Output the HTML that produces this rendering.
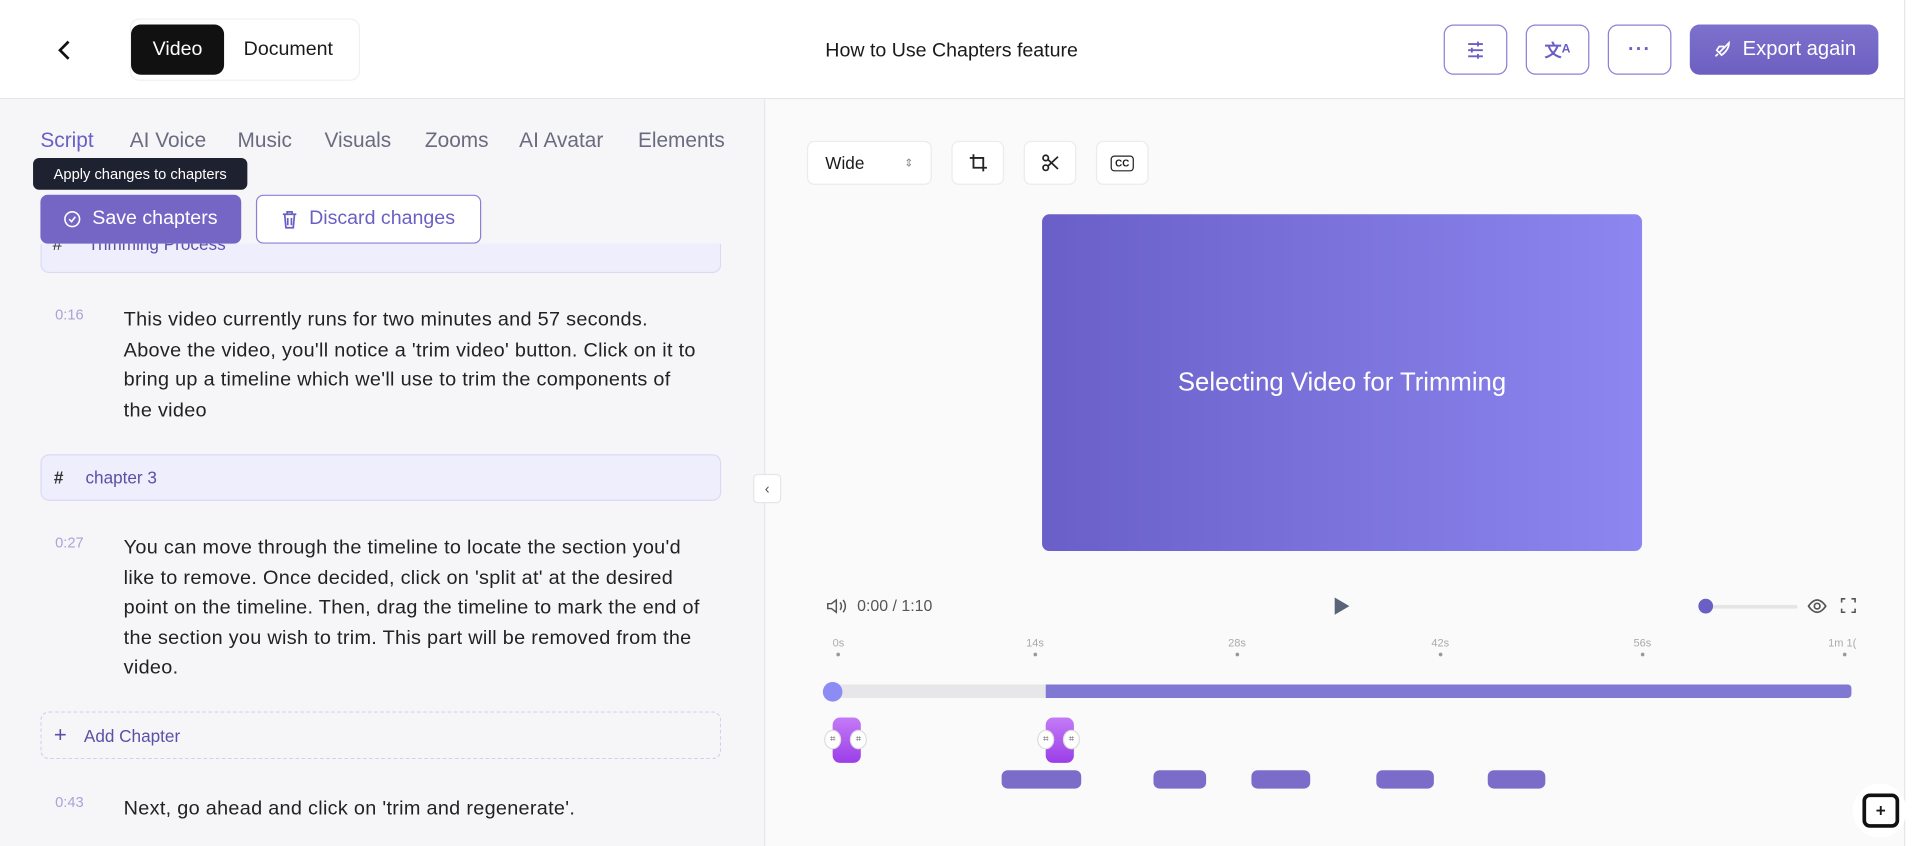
<!DOCTYPE html>
<html><head><meta charset="utf-8"><style>
*{box-sizing:border-box;margin:0;padding:0}
html,body{width:1920px;height:846px;overflow:hidden;background:#fafafa}
#w{width:1568px;height:691px;position:relative;transform:scale(1.22449);transform-origin:0 0;font-family:"Liberation Sans",sans-serif;color:#1a1a1a}
.a{position:absolute}
.hdr{left:0;top:0;width:1568px;height:81px;background:#fff;border-bottom:1px solid #e6e6ea}
.tab{font-size:17px;color:#6b6b80;top:105px}
.ibtn{top:20px;width:52px;height:41px;border:1.3px solid #8b80d6;border-radius:8px;background:#fff;display:flex;align-items:center;justify-content:center;color:#6a5fc4}
.txt{left:101px;font-size:16.2px;letter-spacing:0.25px;line-height:24.6px;color:#222;width:472px}
.ts{left:45px;font-size:12px;color:#a9a3d8}
.tb{top:115px;height:36px;border:1px solid #ebebef;border-radius:6px;background:#fff;display:flex;align-items:center;justify-content:center}
.seg{top:629px;height:15px;background:#7b6cc9;border-radius:5px}
.tick{top:520px;font-size:9px;color:#aaa}
.dot{width:3px;height:3px;border-radius:50%;background:#999;top:533px}
</style></head><body><div id="w">
<div class="a hdr"></div>
<svg class="a" style="left:45px;top:32px" width="16" height="18" viewBox="0 0 16 18"><path d="M11 2 4 9l7 7" fill="none" stroke="#111" stroke-width="2.2"/></svg>
<div class="a" style="left:106px;top:15px;width:188px;height:51px;border:1px solid #f0f0f0;border-radius:8px;background:#fff"></div>
<div class="a" style="left:107px;top:20px;width:76px;height:41px;background:#111;border-radius:8px;color:#fff;font-size:16px;display:flex;align-items:center;justify-content:center">Video</div>
<div class="a" style="left:199px;top:32px;font-size:16px">Document</div>
<div class="a" style="left:674px;top:33px;font-size:16px">How to Use Chapters feature</div>
<div class="a ibtn" style="left:1179px"><svg width="18" height="18" viewBox="0 0 18 18" stroke="#6a5fc4" stroke-width="1.5"><path d="M3 4h12M3 9h12M3 14h12M11 2v4M6 7v4M11 12v4"/></svg></div>
<div class="a ibtn" style="left:1246px;font-size:14px;font-weight:bold">文<span style="font-size:10px">A</span></div>
<div class="a ibtn" style="left:1313px;font-weight:bold;letter-spacing:1px">···</div>
<div class="a" style="left:1380px;top:20px;width:154px;height:41px;border-radius:8px;background:linear-gradient(#7d71cd,#6d5fc0);color:#fff;font-size:16.5px;display:flex;align-items:center;justify-content:center;gap:9px"><svg width="16" height="16" viewBox="0 0 16 16" fill="none" stroke="#fff" stroke-width="1.4"><path d="M6 10 14 2c0 4-2 7-6 10zM6 10 4 8l2-3h4M6 10l2 2M3 13l2-2"/></svg>Export again</div>
<div class="a" style="left:0;top:81px;width:625px;height:610px;background:#f6f6f8;border-right:1px solid #e6e6ea"></div>
<div class="a" style="left:1555px;top:0;width:13px;height:691px;background:#fff;border-left:1px solid #e6e6ea"></div>
<div class="a tab" style="left:33px;color:#6a5fc4">Script</div>
<div class="a tab" style="left:106px">AI Voice</div>
<div class="a tab" style="left:194px">Music</div>
<div class="a tab" style="left:265px">Visuals</div>
<div class="a tab" style="left:347px">Zooms</div>
<div class="a tab" style="left:424px">AI Avatar</div>
<div class="a tab" style="left:521px">Elements</div>
<div class="a" style="left:33px;top:199px;width:556px;height:24px;background:#eeeefc;border:1px solid #dcd9f5;border-top:none;border-radius:0 0 7px 7px;overflow:hidden"><span style="position:absolute;left:9px;top:-8px;font-size:14px;color:#333">#</span><span style="position:absolute;left:38px;top:-8px;font-size:14px;color:#5a50a8">Trimming Process</span></div>
<div class="a" style="left:27px;top:129px;width:175px;height:26px;background:#1e2130;border-radius:5px;color:#fff;font-size:12px;display:flex;align-items:center;justify-content:center">Apply changes to chapters</div>
<div class="a" style="left:33px;top:159px;width:164px;height:40px;background:#7566c6;border-radius:6px;color:#fff;font-size:16px;display:flex;align-items:center;justify-content:center;gap:9px"><svg width="14" height="14" viewBox="0 0 14 14" fill="none" stroke="#fff" stroke-width="1.3"><circle cx="7" cy="7" r="6"/><path d="M4.5 7l2 2 3-4"/></svg>Save chapters</div>
<div class="a" style="left:209px;top:159px;width:184px;height:40px;background:#fff;border:1.3px solid #8b80d6;border-radius:6px;color:#6a5fc4;font-size:16px;display:flex;align-items:center;justify-content:center;gap:9px"><svg width="13" height="15" viewBox="0 0 13 15" fill="none" stroke="#6a5fc4" stroke-width="1.4"><path d="M1 3h11M4.5 3V1h4v2M2.5 3l1 11h6l1-11M5 6v6M8 6v6"/></svg>Discard changes</div>
<div class="a ts" style="top:250px">0:16</div>
<div class="a txt" style="top:249px">This video currently runs for two minutes and 57 seconds. Above the video, you'll notice a 'trim video' button. Click on it to bring up a timeline which we'll use to trim the components of the video</div>
<div class="a" style="left:33px;top:371px;width:556px;height:38px;background:#eeeefc;border:1px solid #dcd9f5;border-radius:7px;font-size:14px;color:#5a50a8;display:flex;align-items:center"><span style="margin-left:10px;font-weight:bold;color:#333">#</span><span style="margin-left:18px">chapter 3</span></div>
<div class="a ts" style="top:436px">0:27</div>
<div class="a txt" style="top:435px">You can move through the timeline to locate the section you'd like to remove. Once decided, click on 'split at' at the desired point on the timeline. Then, drag the timeline to mark the end of the section you wish to trim. This part will be removed from the video.</div>
<div class="a" style="left:33px;top:581px;width:556px;height:39px;border:1px dashed #d4d0ee;border-radius:7px;font-size:14px;color:#5a50a8;display:flex;align-items:center"><span style="margin-left:10px;font-size:18px">+</span><span style="margin-left:14px">Add Chapter</span></div>
<div class="a ts" style="top:648px">0:43</div>
<div class="a txt" style="top:648px">Next, go ahead and click on 'trim and regenerate'.</div>
<div class="a" style="left:615px;top:387px;width:23px;height:24px;background:#fff;border:1px solid #e6e6ea;border-radius:4px;font-size:12px;color:#555;text-align:center;line-height:22px">‹</div>
<div class="a tb" style="left:659px;width:102px;justify-content:space-between;padding:0 14px;font-size:14px">Wide<span style="font-size:9px;color:#888">⇕</span></div>
<div class="a tb" style="left:777px;width:43px"><svg width="16" height="16" viewBox="0 0 16 16" fill="none" stroke="#222" stroke-width="1.5"><path d="M4 1v11h11M1 4h11v11"/></svg></div>
<div class="a tb" style="left:836px;width:43px"><svg width="16" height="16" viewBox="0 0 16 16" fill="none" stroke="#222" stroke-width="1.4"><circle cx="4" cy="4" r="2.2"/><circle cx="4" cy="12" r="2.2"/><path d="M6 5.5 14 13M6 10.5 14 3"/></svg></div>
<div class="a tb" style="left:895px;width:43px"><div style="border:1.4px solid #222;border-radius:3px;font-size:8px;font-weight:bold;padding:1px 3px">CC</div></div>
<div class="a" style="left:851px;top:175px;width:490px;height:275px;border-radius:6px;background:linear-gradient(90deg,#6a5fc8,#8d86f0);color:#fff;font-size:21px;display:flex;align-items:center;justify-content:center">Selecting Video for Trimming</div>
<svg class="a" style="left:675px;top:488px" width="18" height="14" fill="none" stroke="#555" stroke-width="1.2"><path d="M1 5h3l4-3v10L4 9H1zM11 4c1.5 1.5 1.5 4.5 0 6M13.5 2c2.5 3 2.5 7 0 10"/></svg>
<div class="a" style="left:700px;top:487px;font-size:13px;color:#555">0:00 / 1:10</div>
<svg class="a" style="left:1089px;top:487px" width="14" height="16"><path d="M1 1l12 7-12 7z" fill="#5a6478"/></svg>
<div class="a" style="left:1392px;top:494px;width:76px;height:3px;background:#e5e5e5;border-radius:2px"></div>
<div class="a" style="left:1387px;top:489px;width:12px;height:12px;border-radius:50%;background:#6a5fc4"></div>
<svg class="a" style="left:1476px;top:487px" width="16" height="16" fill="none" stroke="#555" stroke-width="1.4"><path d="M1 8s3-5 7-5 7 5 7 5-3 5-7 5-7-5-7-5z"/><circle cx="8" cy="8" r="2.3"/></svg>
<svg class="a" style="left:1503px;top:488px" width="13" height="13" fill="none" stroke="#555" stroke-width="1.3"><path d="M1 4V1h3M9 1h3v3M12 9v3H9M4 12H1V9"/></svg>
<div class="a tick" style="left:680px">0s</div><div class="a dot" style="left:683px"></div>
<div class="a tick" style="left:838px">14s</div><div class="a dot" style="left:844px"></div>
<div class="a tick" style="left:1003px">28s</div><div class="a dot" style="left:1009px"></div>
<div class="a tick" style="left:1169px">42s</div><div class="a dot" style="left:1175px"></div>
<div class="a tick" style="left:1334px">56s</div><div class="a dot" style="left:1340px"></div>
<div class="a tick" style="left:1493px">1m 1(</div><div class="a dot" style="left:1505px"></div>
<div class="a" style="left:680px;top:559px;width:174px;height:11px;background:#e7e7ea;border-radius:4px 0 0 4px"></div>
<div class="a" style="left:854px;top:559px;width:658px;height:11px;background:#8178d4;border-radius:0 3px 3px 0"></div>
<div class="a" style="left:672px;top:557px;width:16px;height:16px;border-radius:50%;background:#8d8cf5"></div>
<div class="a" style="left:680px;top:586px;width:23px;height:37px;border-radius:6px;background:linear-gradient(#c47af7,#9b3ee8)"></div>
<div class="a" style="left:854px;top:586px;width:23px;height:37px;border-radius:6px;background:linear-gradient(#c47af7,#9b3ee8)"></div>
<div class="a" style="left:673px;top:596px;width:14px;height:16px;border-radius:50%;background:#fff;border:1px solid #ddd;font-size:8px;text-align:center;line-height:14px;color:#666">⌗</div>
<div class="a" style="left:694px;top:596px;width:14px;height:16px;border-radius:50%;background:#fff;border:1px solid #ddd;font-size:8px;text-align:center;line-height:14px;color:#666">⌗</div>
<div class="a" style="left:847px;top:596px;width:14px;height:16px;border-radius:50%;background:#fff;border:1px solid #ddd;font-size:8px;text-align:center;line-height:14px;color:#666">⌗</div>
<div class="a" style="left:868px;top:596px;width:14px;height:16px;border-radius:50%;background:#fff;border:1px solid #ddd;font-size:8px;text-align:center;line-height:14px;color:#666">⌗</div>
<div class="a seg" style="left:818px;width:65px"></div>
<div class="a seg" style="left:942px;width:43px"></div>
<div class="a seg" style="left:1022px;width:48px"></div>
<div class="a seg" style="left:1124px;width:47px"></div>
<div class="a seg" style="left:1215px;width:47px"></div>
<div class="a" style="left:1513px;top:640px;width:44px;height:44px;border-radius:50%;background:#fff"></div>
<div class="a" style="left:1521px;top:648px;width:30px;height:28px;border:3px solid #111;border-radius:6px;font-size:14px;font-weight:bold;text-align:center;line-height:22px">+</div>
</div></body></html>
